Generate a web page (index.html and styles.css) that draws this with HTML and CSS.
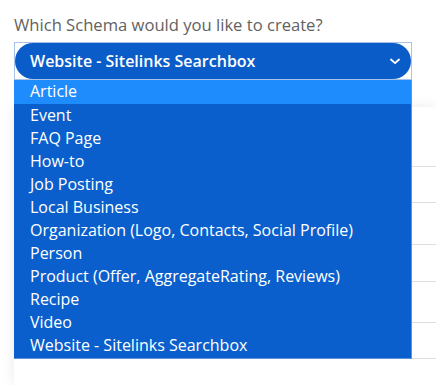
FILE: index.html
```html
<!doctype html>
<html lang="en">
  <head>
    <title>Schema</title>
    <meta charset="UTF-8" />
    <meta name="viewport" content="width=device-width, initial-scale=1" />
    <link rel="stylesheet" href="styles.css">
  </head>

  <body>
    <div class="field">
      <label for="schema">Which Schema would you like to create?</label>
      <div class="select-box">
        <div class="select" id="schema">
          <span>Website - Sitelinks Searchbox</span>
          <svg class="chevron" width="10" height="7" viewBox="0 0 10 7">
            <path d="M1 1.5 L5 5.2 L9 1.5" fill="none" stroke="#fff" stroke-width="1.8" stroke-linecap="round" stroke-linejoin="round" />
          </svg>
        </div>

        <ul class="options">
          <li class="active">Article</li>
          <li>Event</li>
          <li>FAQ Page</li>
          <li>How-to</li>
          <li>Job Posting</li>
          <li>Local Business</li>
          <li>Organization (Logo, Contacts, Social Profile)</li>
          <li>Person</li>
          <li>Product (Offer, AggregateRating, Reviews)</li>
          <li>Recipe</li>
          <li>Video</li>
          <li>Website - Sitelinks Searchbox</li>
        </ul>
      </div>
    </div>

    <div class="card">
      <div class="row row-first"></div>
      <div class="row" style="height: 35px"></div>
      <div class="row" style="height: 41px"></div>
      <div class="row" style="height: 36px"></div>
      <div class="row" style="height: 40px"></div>
      <div class="row" style="height: 35px"></div>
    </div>
  </body>
</html>
```

FILE: styles.css
```css
body {
  margin: 0;
  padding: 0;
  background-color: #ffffff;
  font-family: 'Open Sans', 'Liberation Sans', sans-serif;
  overflow: hidden;
}

.field {
  padding: 14px 0 0 14px;
  width: 398px;
}

label {
  display: block;
  font-size: 16.6px;
  line-height: 22px;
  color: #626262;
  margin-bottom: 6px;
}

.select-box {
  position: relative;
  height: 38px;
  border: 1px solid #a9c2ea;
  box-sizing: border-box;
}

.select {
  display: flex;
  align-items: center;
  justify-content: space-between;
  height: 36px;
  padding: 0 11px 0 15px;
  border-radius: 18px;
  background-color: #0a5dc9;
  color: #ffffff;
  font-size: 16px;
  font-weight: 600;
}

.chevron {
  margin-top: 1px;
}

.options {
  position: absolute;
  top: 37px;
  left: -1px;
  z-index: 2;
  width: 398px;
  margin: 0;
  padding: 0 0 1px 0;
  list-style: none;
  background-color: #0a5fcc;
  border-right: 1px solid #5f93de;
  border-bottom: 1px solid #5f93de;
  box-sizing: border-box;
}

.options li {
  height: 23px;
  line-height: 23px;
  padding-left: 16px;
  font-size: 16px;
  color: #ffffff;
}

.options li.active {
  background-color: #1f8cfd;
  height: 24px;
}

.card {
  margin: 27px 0 0 14px;
  height: 278px;
  background-color: #ffffff;
  box-shadow: 0 0 12px rgba(0, 0, 0, 0.09);
}

.row {
  margin-left: 18px;
  border-bottom: 1px solid #dedede;
}

.row-first {
  height: 59px;
}
```
